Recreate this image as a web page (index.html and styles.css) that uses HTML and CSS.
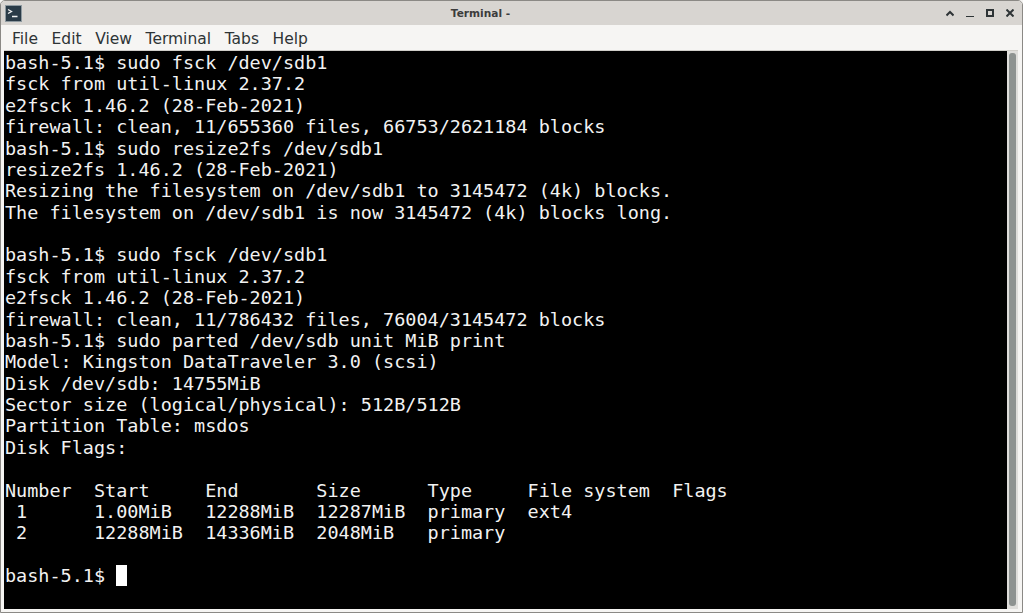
FILE: index.html
```html
<!DOCTYPE html>
<html lang="en">
<head>
<meta charset="utf-8">
<title>Terminal -</title>
<link rel="stylesheet" href="styles.css">
</head>
<body>
<div class="window">
  <header class="titlebar">
    <svg class="app-icon" width="17" height="17" viewBox="0 0 17 17" aria-hidden="true">
      <rect x="0.5" y="0.5" width="16" height="16" fill="#2a3b47" stroke="#8f9aa0"/>
      <path d="M3 4.5 L6.5 6.5 L3 8.5" fill="none" stroke="#f2f2f2" stroke-width="1.3"/>
      <path d="M7 11.5 H12.5" stroke="#f2f2f2" stroke-width="1.4"/>
    </svg>
    <div class="title">Terminal -</div>
    <div class="controls">
      <svg width="8" height="8" viewBox="0 0 8 8" aria-hidden="true"><path d="M0.5 6.5 L4 3 L7.5 6.5" fill="none" stroke="#2e3436" stroke-width="2"/></svg>
      <svg width="8" height="8" viewBox="0 0 8 8" aria-hidden="true"><path d="M0 8 H8" fill="none" stroke="#2e3436" stroke-width="2"/></svg>
      <svg width="8" height="8" viewBox="0 0 8 8" aria-hidden="true"><rect x="1" y="1" width="6" height="6" fill="none" stroke="#2e3436" stroke-width="2"/></svg>
      <svg width="8" height="8" viewBox="0 0 8 8" aria-hidden="true"><path d="M0.5 0.5 L7.5 7.5 M7.5 0.5 L0.5 7.5" fill="none" stroke="#2e3436" stroke-width="2"/></svg>
    </div>
  </header>
  <nav class="menubar">
    <span>File</span><span>Edit</span><span>View</span><span>Terminal</span><span>Tabs</span><span>Help</span>
  </nav>
  <main class="content">
    <pre class="terminal">bash-5.1$ sudo fsck /dev/sdb1
fsck from util-linux 2.37.2
e2fsck 1.46.2 (28-Feb-2021)
firewall: clean, 11/655360 files, 66753/2621184 blocks
bash-5.1$ sudo resize2fs /dev/sdb1
resize2fs 1.46.2 (28-Feb-2021)
Resizing the filesystem on /dev/sdb1 to 3145472 (4k) blocks.
The filesystem on /dev/sdb1 is now 3145472 (4k) blocks long.

bash-5.1$ sudo fsck /dev/sdb1
fsck from util-linux 2.37.2
e2fsck 1.46.2 (28-Feb-2021)
firewall: clean, 11/786432 files, 76004/3145472 blocks
bash-5.1$ sudo parted /dev/sdb unit MiB print
Model: Kingston DataTraveler 3.0 (scsi)
Disk /dev/sdb: 14755MiB
Sector size (logical/physical): 512B/512B
Partition Table: msdos
Disk Flags: 

Number  Start     End       Size      Type     File system  Flags
 1      1.00MiB   12288MiB  12287MiB  primary  ext4
 2      12288MiB  14336MiB  2048MiB   primary

bash-5.1$ <span class="cursor"></span></pre>
    <div class="scrollbar"><div class="thumb"></div></div>
  </main>
</div>
</body>
</html>
```
FILE: styles.css
```css
html, body {
  margin: 0;
  height: 100%;
  background: #f6f5f3;
  overflow: hidden;
}
.window {
  box-sizing: border-box;
  width: 1023px;
  height: 613px;
  display: flex;
  flex-direction: column;
  border: 1px solid #8b8985;
  border-top-left-radius: 5px;
  border-top-right-radius: 5px;
  background: #f6f5f3;
  overflow: hidden;
}
.titlebar {
  flex: 0 0 24px;
  display: flex;
  align-items: center;
  padding: 0 8px 0 4px;
  background: #d8d5d1;
}
.app-icon {
  flex: none;
}
.title {
  flex: 1;
  text-align: center;
  padding-right: 7px;
  font: bold 10.6px "DejaVu Sans", sans-serif;
  color: #3c3c3c;
}
.controls {
  display: flex;
  align-items: center;
  gap: 12px;
}
.menubar {
  box-sizing: border-box;
  flex: 0 0 25px;
  display: flex;
  align-items: center;
  gap: 13.6px;
  padding: 3px 0 0 11px;
  font: 15.5px "DejaVu Sans", sans-serif;
  color: #2e3436;
}
.content {
  flex: 1;
  display: flex;
  min-height: 0;
  margin: 0 4px 3px 3px;
  border-top: 1px solid #d0cec9;
}
.terminal {
  flex: 1;
  margin: 0;
  padding: 1.1px 0 0 1px;
  background: #000;
  color: #f2f2f2;
  font: 18.48px/21.375px "DejaVu Sans Mono", monospace;
  overflow: hidden;
}
.cursor {
  display: inline-block;
  width: 11px;
  height: 21px;
  background: #fff;
  vertical-align: -4px;
}
.scrollbar {
  box-sizing: border-box;
  flex: 0 0 11px;
  background: #dfdedb;
  padding: 2px 2px 3px 2px;
  display: flex;
}
.thumb {
  flex: 1;
  background: #8e9391;
  border-radius: 3px;
}
```
